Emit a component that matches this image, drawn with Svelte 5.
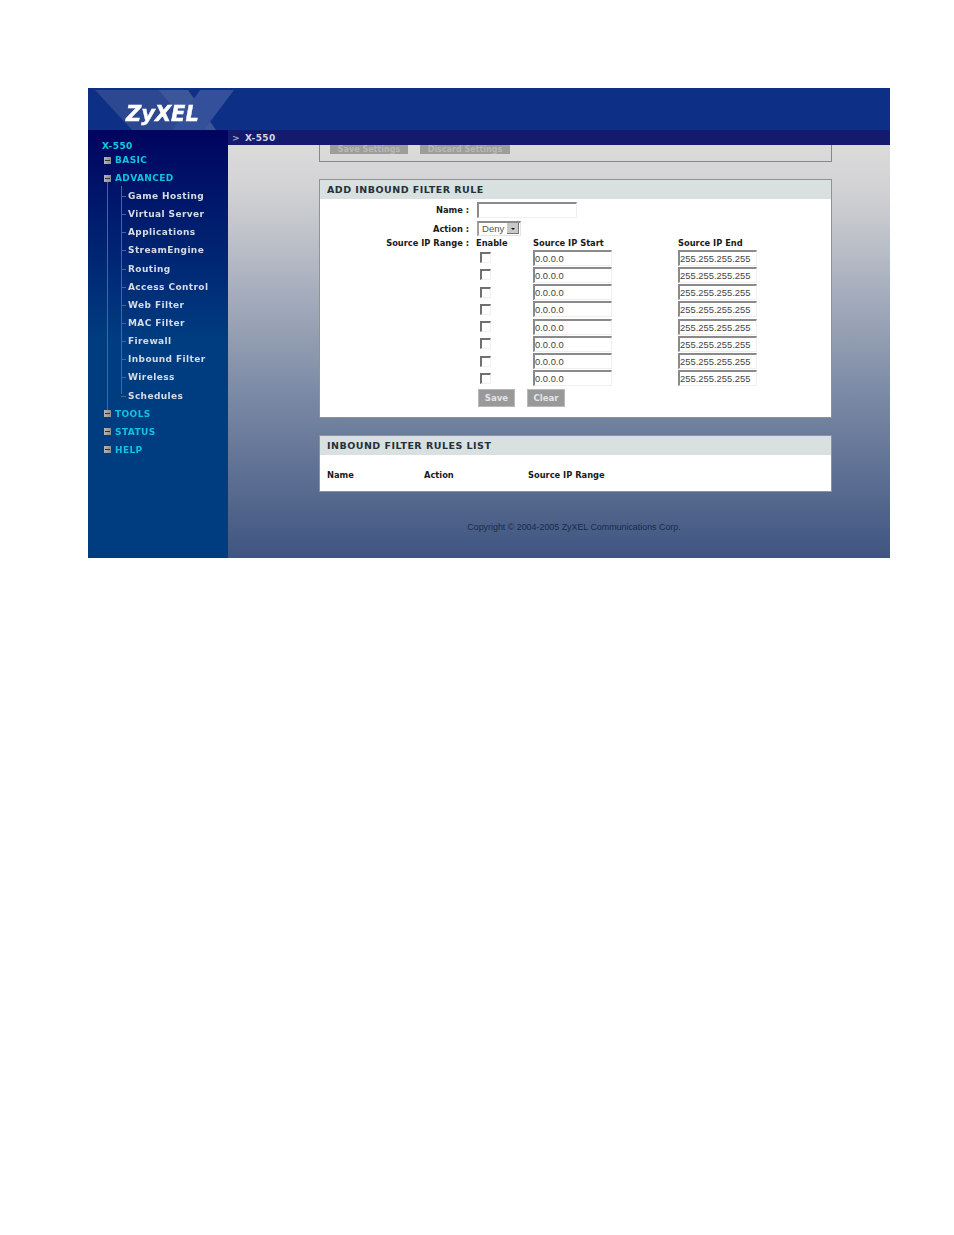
<script>
    const basicItems = ['Game Hosting', 'Virtual Server', 'Applications', 'StreamEngine', 'Routing', 'Access Control', 'Web Filter', 'MAC Filter', 'Firewall', 'Inbound Filter', 'Wireless', 'Schedules'];
    const rows = Array.from({ length: 8 }, (_, i) => i);
</script>

<div class="page">
    <div class="shot">
        <header class="top">
            <svg class="mark" viewBox="0 0 160 42" aria-hidden="true">
                <path d="M7 2H70L106 42H44Z" fill="#2b4890" />
                <path d="M70 2H100L128 42H106Z" fill="#3c5799" />
                <path d="M146 2H112L84 42H116Z" fill="#34509a" />
            </svg>
            <span class="logo">ZyXEL</span>
        </header>

        <div class="body">
            <nav class="side">
                <div class="device">X-550</div>
                <div class="group first"><span class="box"></span>BASIC</div>
                <div class="group"><span class="box"></span>ADVANCED</div>
                <ul class="sub">
                    {#each basicItems as item}
                        <li>{item}</li>
                    {/each}
                </ul>
                <div class="group"><span class="box"></span>TOOLS</div>
                <div class="group"><span class="box"></span>STATUS</div>
                <div class="group"><span class="box"></span>HELP</div>
            </nav>

            <main class="main">
                <div class="crumb"><span class="chev">&gt;</span>X-550</div>

                <div class="content">
                    <div class="stub">
                        <button class="stub-btn one" type="button">Save Settings</button>
                        <button class="stub-btn two" type="button">Discard Settings</button>
                    </div>

                    <section class="panel add">
                        <h2>ADD INBOUND FILTER RULE</h2>
                        <div class="form">
                            <div class="lab name-row">Name :</div>
                            <div class="name-row wide"><input class="field name" type="text" /></div>

                            <div class="lab action-row">Action :</div>
                            <div class="action-row wide">
                                <span class="select">Deny<span class="drop"></span></span>
                            </div>

                            <div class="lab head-row">Source IP Range :</div>
                            <div class="head enable">Enable</div>
                            <div class="head">Source IP Start</div>
                            <div class="head">Source IP End</div>

                            {#each rows as r}
                                <div class="spacer"></div>
                                <div class="cell"><span class="check"></span></div>
                                <div class="cell"><input class="field ip" type="text" value="0.0.0.0" /></div>
                                <div class="cell"><input class="field ip" type="text" value="255.255.255.255" /></div>
                            {/each}

                            <div class="spacer"></div>
                            <div class="actions">
                                <button class="btn save" type="button">Save</button>
                                <button class="btn clear" type="button">Clear</button>
                            </div>
                        </div>
                    </section>

                    <section class="panel list">
                        <h2>INBOUND FILTER RULES LIST</h2>
                        <div class="list-head">
                            <span class="c-name">Name</span>
                            <span class="c-action">Action</span>
                            <span>Source IP Range</span>
                        </div>
                    </section>

                    <p class="copy">Copyright © 2004-2005 ZyXEL Communications Corp.</p>
                </div>
            </main>
        </div>
    </div>
</div>

<style>
    :global(body) {
        margin: 0;
        background: #fff;
    }

    .page {
        height: 1235px;
        padding: 88px 64px 0 88px;
        box-sizing: border-box;
    }

    .shot {
        width: 802px;
        height: 470px;
        display: flex;
        flex-direction: column;
        overflow: hidden;
        filter: blur(0.55px);
        font-family: "DejaVu Sans", Verdana, sans-serif;
    }

    .top {
        position: relative;
        height: 42px;
        flex: none;
        background: #0d2f85;
        display: flex;
        align-items: center;
    }

    .mark {
        position: absolute;
        left: 0;
        top: 0;
        width: 160px;
        height: 42px;
    }

    .logo {
        position: relative;
        margin: 10px 0 0 38px;
        color: #fff;
        font-family: "DejaVu Sans", Verdana, sans-serif;
        font-style: italic;
        font-weight: 700;
        font-size: 21px;
        line-height: 1;
        -webkit-text-stroke: 0.4px #fff;
    }

    .body {
        flex: 1;
        display: flex;
        min-height: 0;
    }

    /* sidebar tree */
    .side {
        position: relative;
        width: 140px;
        flex: none;
        box-sizing: border-box;
        padding: 10px 0 0 14px;
        background: linear-gradient(#00045f 0, #003c80 210px, #003c80 100%);
        font-size: 9px;
        font-weight: 700;
        letter-spacing: 0.4px;
    }

    .side::before {
        content: "";
        position: absolute;
        left: 19px;
        top: 52px;
        height: 232px;
        border-left: 1px solid #4a6592;
    }

    .device {
        height: 12px;
        line-height: 12px;
        color: #14c8dc;
    }

    .group {
        height: 18px;
        line-height: 18px;
        display: flex;
        align-items: center;
        color: #10c4dc;
        position: relative;
    }

    .group.first {
        height: 17px;
        line-height: 17px;
    }

    .box {
        width: 7px;
        height: 7px;
        margin: 0 4px 0 2px;
        background: linear-gradient(90deg, #b4b4b4, #8e8e8e);
        flex: none;
        position: relative;
    }

    .box::after {
        content: "";
        position: absolute;
        left: 1px;
        right: 1px;
        top: 3px;
        height: 1px;
        background: #333;
    }

    .sub {
        position: relative;
        list-style: none;
        margin: 0;
        padding: 0 0 0 26px;
    }

    .sub::before {
        content: "";
        position: absolute;
        left: 19px;
        top: -1px;
        height: 208px;
        border-left: 1px solid #4a6592;
    }

    .sub li {
        position: relative;
        height: 18.15px;
        line-height: 18.15px;
        color: #d6dce6;
        white-space: nowrap;
    }

    .sub li::before {
        content: "";
        position: absolute;
        left: -7px;
        top: 9px;
        width: 5px;
        border-top: 1px solid #4a6592;
    }

    /* main area */
    .main {
        flex: 1;
        min-width: 0;
        display: flex;
        flex-direction: column;
        background: linear-gradient(#dedede 0, #d2d2d4 60px, #7c8ba6 260px, #3f5580 100%);
    }

    .crumb {
        height: 15px;
        flex: none;
        display: flex;
        align-items: center;
        padding-left: 4px;
        background: #141a6e;
        color: #d4d4e0;
        font-size: 9px;
        font-weight: 700;
        letter-spacing: 0.4px;
    }

    .chev {
        color: #a9a9b8;
        margin-right: 5px;
    }

    .content {
        flex: 1;
        min-height: 0;
        padding-left: 91px;
        display: flex;
        flex-direction: column;
        font-size: 9px;
        color: #1a1a1a;
    }

    .stub {
        width: 513px;
        height: 17px;
        flex: none;
        box-sizing: border-box;
        border: 1px solid #7f7dcc;
        border-top: 0;
        display: flex;
        align-items: flex-end;
        padding: 0 0 7px 10px;
        overflow: hidden;
    }

    .stub-btn {
        height: 9px;
        padding: 0;
        border: 0;
        background: #9d9d9d;
        color: #b8b8b8;
        font: 700 8px "DejaVu Sans", sans-serif;
        line-height: 2px;
    }

    .stub-btn.one {
        width: 78px;
        margin-right: 12px;
    }

    .stub-btn.two {
        width: 90px;
    }

    .panel {
        width: 513px;
        box-sizing: border-box;
        background: #fff;
        border: 1px solid #8d9590;
    }

    .panel h2 {
        margin: 0;
        height: 19px;
        line-height: 20px;
        padding-left: 7px;
        background: #d8e1df;
        color: #26303a;
        font-size: 9.5px;
        font-weight: 700;
        letter-spacing: 0.48px;
    }

    .add {
        height: 239px;
        flex: none;
        margin-top: 17px;
    }

    .form {
        display: grid;
        grid-template-columns: 157px 56px 145px 1fr;
        grid-template-rows: 20px 17px 12px repeat(8, 17.25px) 24px;
        padding-top: 1px;
        align-items: center;
        font-size: 8.3px;
        font-weight: 700;
    }

    .lab {
        text-align: right;
        padding-right: 8px;
        white-space: nowrap;
    }

    .wide {
        grid-column: 2 / -1;
    }

    .field {
        box-sizing: border-box;
        display: block;
        padding: 0;
        margin: 0;
        background: #fff;
        border: 1px solid #efefef;
        border-top: 2px solid #8a8a8a;
        border-left: 2px solid #8a8a8a;
        border-radius: 0;
        outline: none;
        font: 400 9.4px "Liberation Sans", Arial, sans-serif;
        color: #444;
    }

    .field.name {
        width: 100px;
        height: 16px;
    }

    .field.ip {
        width: 79px;
        height: 16px;
    }

    .select {
        box-sizing: border-box;
        display: flex;
        align-items: center;
        justify-content: space-between;
        width: 44px;
        height: 15px;
        margin-top: -1px;
        padding: 0 1px 0 3px;
        border: 1px solid #e4e4e4;
        border-top: 2px solid #8a8a8a;
        border-left: 2px solid #a0a0a0;
        font: 400 9.6px "Liberation Sans", Arial, sans-serif;
        color: #555;
    }

    .drop {
        position: relative;
        width: 12px;
        height: 11px;
        background: #c8c8c4;
        box-shadow: inset -1px -1px 0 #777;
    }

    .drop::after {
        content: "";
        position: absolute;
        left: 4px;
        top: 5px;
        border: 2px solid transparent;
        border-top: 2px solid #111;
    }

    .head {
        white-space: nowrap;
    }

    .head.enable {
        margin-left: -1px;
    }

    .cell {
        display: flex;
        align-items: center;
    }

    .check {
        box-sizing: border-box;
        width: 11px;
        height: 11px;
        margin-left: 3px;
        background: #fff;
        border: 1px solid #efefef;
        border-top: 2px solid #707070;
        border-left: 2px solid #707070;
    }

    .actions {
        grid-column: 2 / -1;
        align-self: start;
        display: flex;
        gap: 12px;
        padding: 2px 0 0 1px;
    }

    .btn {
        height: 18px;
        padding: 0;
        border: 1px solid #b8b8b8;
        background: #999;
        color: #e4e4e4;
        font: 700 8.6px "DejaVu Sans", sans-serif;
    }

    .btn.save {
        width: 37px;
    }

    .btn.clear {
        width: 38px;
    }

    .list {
        height: 57px;
        flex: none;
        margin-top: 17px;
    }

    .list-head {
        display: flex;
        padding: 15px 0 0 7px;
        font-size: 8.3px;
        font-weight: 700;
        white-space: nowrap;
    }

    .c-name {
        width: 97px;
    }

    .c-action {
        width: 104px;
    }

    .copy {
        width: 510px;
        margin: 30px 0 0;
        text-align: center;
        font: 400 8.9px "Liberation Sans", Arial, sans-serif;
        color: #1a2a4a;
    }
</style>
